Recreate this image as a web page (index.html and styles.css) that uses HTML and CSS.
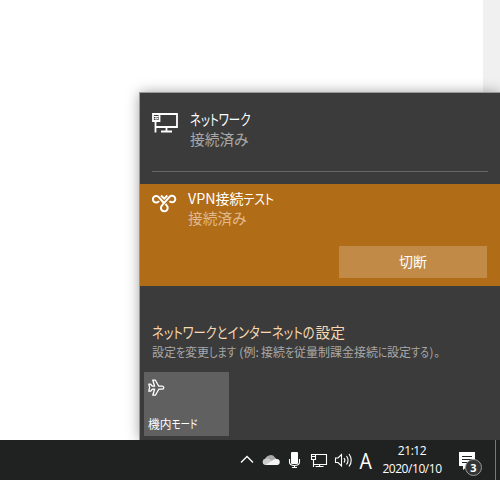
FILE: index.html
```
<!DOCTYPE html>
<html lang="ja">
<head>
<meta charset="utf-8">
<title>ネットワーク</title>
<link rel="stylesheet" href="styles.css">
</head>
<body>
<div class="desktop">
  <div class="edge"></div>
  <section class="flyout">
    <div class="row network">
      <svg class="icon" width="28" height="24" fill="none" stroke="#fff" stroke-width="1.8"><path d="M8 2H25V15H4M1 2H7.5V9H1ZM3.5 9V20.5M14.5 15V19.5M9 19.5H20"/><path d="M2 4.5H6.5M3 6H5.5V7H3Z" stroke-width="1"/></svg>
      <div class="labels">
        <svg class="label t15 white" width="70" height="20"><text x="0" y="15" textLength="60.5" lengthAdjust="spacingAndGlyphs">ネットワーク</text></svg>
        <svg class="label t15 dim" width="70" height="20"><text x="0" y="15" textLength="58.5" lengthAdjust="spacingAndGlyphs">接続済み</text></svg>
      </div>
    </div>
    <hr>
    <div class="vpn">
      <div class="row">
        <svg class="icon" width="26" height="22" fill="none" stroke="#fff" stroke-width="2"><path d="M11.5 9.5L7 4.5A3.3 3.3 0 1 0 7 8M9 2.5L12.2 5.6L15.3 2.5M17.5 8.2A3.3 3.3 0 1 0 17.3 4.2L10 12.4A3.4 3.4 0 1 0 14.8 12.6L13.5 11"/></svg>
        <div class="labels">
          <svg class="label t14 white" width="100" height="20"><text x="0" y="15" textLength="27.5" lengthAdjust="spacingAndGlyphs">VPN</text><text x="27.5" y="15" textLength="28" lengthAdjust="spacingAndGlyphs">接続</text><text x="55.5" y="15" textLength="30.5" lengthAdjust="spacingAndGlyphs">テスト</text></svg>
          <svg class="label t15 tan" width="70" height="20"><text x="0" y="15" textLength="58.5" lengthAdjust="spacingAndGlyphs">接続済み</text></svg>
        </div>
      </div>
      <button>切断</button>
    </div>
    <div class="settings">
      <svg class="label t15 link" width="220" height="22"><text x="0" y="16" textLength="162.5" lengthAdjust="spacingAndGlyphs">ネットワークとインターネットの</text><text x="163.5" y="16" textLength="29.5" lengthAdjust="spacingAndGlyphs">設定</text></svg>
      <svg class="label t12 dim" width="300" height="18"><text x="0" y="13">設定</text><text x="24" y="13" textLength="9" lengthAdjust="spacingAndGlyphs">を</text><text x="33" y="13">変更</text><text x="57" y="13" textLength="27" lengthAdjust="spacingAndGlyphs">します</text><text x="87" y="13" textLength="4.5" lengthAdjust="spacingAndGlyphs">(</text><text x="91.5" y="13">例</text><text x="103.5" y="13">:</text><text x="109" y="13">接続</text><text x="133" y="13" textLength="9" lengthAdjust="spacingAndGlyphs">を</text><text x="142" y="13">従量制課金接続</text><text x="226" y="13" textLength="9" lengthAdjust="spacingAndGlyphs">に</text><text x="235" y="13">設定</text><text x="259" y="13" textLength="18" lengthAdjust="spacingAndGlyphs">する</text><text x="277.5" y="13" textLength="4" lengthAdjust="spacingAndGlyphs">)</text><text x="282" y="13">。</text></svg>
    </div>
    <div class="tile">
      <svg width="18" height="18" fill="none" stroke="#fff" stroke-width="1.3" stroke-linejoin="round"><path d="M.8 5.2H2.6L4.4 7.2H6.6L4.8 1.2H7.4L10.8 7.2H14.2Q15.8 7.4 15.8 8.7Q15.8 10 14.2 10.2H10.8L7.4 16.2H4.8L6.6 10.2H4.4L2.6 12.2H.8L1.6 8.7Z"/></svg>
      <svg class="label t12 white" width="70" height="18"><text x="0" y="13" textLength="23.5" lengthAdjust="spacingAndGlyphs">機内</text><text x="23.5" y="13" textLength="26" lengthAdjust="spacingAndGlyphs">モード</text></svg>
    </div>
  </section>
</div>
<footer class="taskbar">
  <svg class="tray" width="142" height="40" fill="none" stroke="#fff" stroke-width="1.1">
    <path d="M4 22.5L10 16.5L16 22.5" stroke-width="1.3"/>
    <g stroke="none"><path d="M28 20.5A5.5 5.5 0 0 1 38 17.5L41 20.5L32 25Z" fill="#aaa"/><path d="M28 25A3.2 3.2 0 0 1 28 18.8A4 4 0 0 1 32 18.8L41 25Z" fill="#ccc"/><path d="M28.5 25L36 20A5 5 0 0 1 39.5 19A3 3 0 0 1 40 25Z" fill="#f4f4f4"/><rect x="54" y="12" width="7" height="12" rx="1" fill="#fff"/></g>
    <path d="M52.5 19V22Q52.5 25.5 57.5 25.5Q62.5 25.5 62.5 22V19M57.5 25.5V28M55 27.5H60"/>
    <path d="M78.5 14.5H89.5V24.5H76.5M74.5 14.5H78.5V19.5H74.5ZM76.5 19.5V27M82.5 24.5V27M78.5 26.5H86.5M75 16.5H78"/>
    <path d="M98.5 18H101L104.5 14.5V26L101 22.5H98.5ZM107 18Q108.8 20.2 107 22.5M109.5 16Q112.7 20.2 109.5 24.5M112 14Q116.5 20.2 112 26.5"/>
  </svg>
  <span class="ime">A</span>
  <div class="clock"><span>21:12</span><span>2020/10/10</span></div>
  <div class="action">
    <svg width="20" height="20"><path d="M1 1H17V15H10L5 19V15H1Z" fill="#fff"/><path d="M4 5.5H14M4 8.5H14M4 11.5H11" stroke="#202222"/></svg>
    <span class="badge">3</span>
  </div>
  <div class="peek"></div>
</footer>
</body>
</html>
```
FILE: styles.css
```
* { box-sizing: border-box; }
body {
  margin: 0;
  width: 500px;
  height: 480px;
  overflow: hidden;
  background: #fff;
  font-family: "Noto Sans", "Noto Sans CJK JP", sans-serif;
  color: #fff;
}
svg { display: block; flex: none; }
.desktop { height: 440px; padding: 93px 0 0 140px; position: relative; overflow: hidden; }
.edge { position: absolute; top: 0; right: 0; width: 17px; height: 100%; background: #f0f0f0; }
.flyout {
  position: relative;
  height: 347px;
  background: #3b3b3b;
  box-shadow: 0 0 0 1px #999, 0 0 13px rgba(0, 0, 0, .4);
}
.row { display: flex; padding-left: 12px; }
.network { height: 78px; padding-top: 17px; gap: 10px; }
.network .icon { margin-top: 2px; }
.label { overflow: visible; font-family: "Noto Sans CJK JP", sans-serif; }
.t15 { font-size: 15px; }
.t14 { font-size: 14px; }
.t12 { font-size: 12px; }
.white { fill: #fff; }
.dim { fill: #a8a8a8; }
.tan { fill: #e0b98c; }
.link { fill: #f8d8b0; }
.label text { font-feature-settings: "palt"; }
hr { width: 336px; height: 1px; margin: 0 0 12px 12px; border: 0; background: #666; }
.vpn { height: 102px; padding-top: 5px; background: #b06c17; }
.vpn .row { gap: 10px; height: 57px; }
.vpn .icon { margin-top: 4px; }
button {
  display: block;
  width: 148px;
  height: 32px;
  margin-left: 199px;
  padding: 0 0 2px;
  border: 0;
  background: #c18b47;
  color: #fff;
  font: 14px/30px "Noto Sans CJK JP", sans-serif;
}
.settings { padding: 36px 0 0 12px; height: 86px; }
.tile {
  width: 85px;
  height: 64px;
  margin-left: 4px;
  padding: 7px 4px 0;
  display: grid;
  grid-template-rows: 37px 18px;
  background: #606060;
}
.taskbar { display: flex; height: 40px; padding-left: 237px; background: #202222; }
.tray { margin-right: -20px; width: 142px; }
.ime { width: 16px; font: 21px/42px "Open Sans", sans-serif; transform: scaleX(.93); }
.clock {
  width: 78px;
  margin-left: -2px;
  padding-top: 2px;
  display: flex;
  flex-direction: column;
  align-items: center;
  font: 12px/18px "Open Sans", sans-serif;
  letter-spacing: -.45px;
}
.action { position: relative; width: 44px; padding: 11px 0 0 7px; }
.badge {
  position: absolute;
  left: 14px;
  top: 19px;
  width: 17px;
  height: 17px;
  border: 1px solid #999;
  border-radius: 50%;
  background: #333535;
  font: bold 11px/15px "Open Sans", sans-serif;
  text-align: center;
}
.peek { width: 1px; background: #777; }
```
